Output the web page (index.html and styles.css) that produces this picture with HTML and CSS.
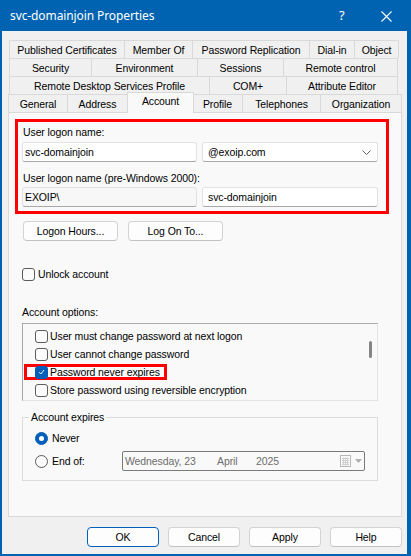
FILE: index.html
```html
<!DOCTYPE html>
<html>
<head>
<meta charset="utf-8">
<link rel="stylesheet" href="styles.css">
</head>
<body>
<div class="window">
  <div class="titlebar">
    <span class="title">svc-domainjoin Properties</span>
    <span class="help">?</span>
    <svg class="close" width="11" height="11" viewBox="0 0 11 11"><path d="M0.5 0.5 L10.5 10.5 M10.5 0.5 L0.5 10.5" stroke="#fff" stroke-width="1.1" fill="none"/></svg>
  </div>
  <div class="client">
    <div class="tabs">
      <div class="tab-row row1">
        <div class="tab">Published Certificates</div><div class="tab">Member Of</div><div class="tab">Password Replication</div><div class="tab">Dial-in</div><div class="tab">Object</div>
      </div>
      <div class="tab-row row2">
        <div class="tab">Security</div><div class="tab">Environment</div><div class="tab">Sessions</div><div class="tab">Remote control</div>
      </div>
      <div class="tab-row row3">
        <div class="tab">Remote Desktop Services Profile</div><div class="tab">COM+</div><div class="tab">Attribute Editor</div>
      </div>
      <div class="tab-row row4">
        <div class="tab">General</div><div class="tab">Address</div><div class="tab active">Account</div><div class="tab">Profile</div><div class="tab">Telephones</div><div class="tab">Organization</div>
      </div>
    </div>
    <div class="panel">
      <div class="redbox">
        <div class="label">User logon name:</div>
        <div class="field-row">
          <div class="input wide">svc-domainjoin</div>
          <div class="input combo">@exoip.com<svg class="chev" width="9" height="5" viewBox="0 0 9 5"><path d="M0.5 0.5 L4.5 4.5 L8.5 0.5" stroke="#606060" fill="none" stroke-width="1"/></svg></div>
        </div>
        <div class="label label2">User logon name (pre-Windows 2000):</div>
        <div class="field-row tight">
          <div class="input wide readonly">EXOIP\</div>
          <div class="input combo">svc-domainjoin</div>
        </div>
      </div>
      <div class="btn-row">
        <div class="btn">Logon Hours...</div>
        <div class="btn">Log On To...</div>
      </div>
      <div class="check-row unlock">
        <span class="cb"></span><span class="cb-text">Unlock account</span>
      </div>
      <div class="label opts">Account options:</div>
      <div class="listbox">
        <div class="item"><span class="cb"></span><span class="cb-text">User must change password at next logon</span></div>
        <div class="item"><span class="cb"></span><span class="cb-text">User cannot change password</span></div>
        <div class="item"><span class="hl"><span class="cb checked"><svg width="7" height="6" viewBox="0 0 7 6"><path d="M1 3.2 L2.8 5 L6 1" stroke="#fff" stroke-width="1" fill="none"/></svg></span><span class="cb-text">Password never expires</span></span></div>
        <div class="item"><span class="cb"></span><span class="cb-text">Store password using reversible encryption</span></div>
        <div class="thumb"></div>
      </div>
      <div class="group">
        <div class="legend">Account expires</div>
        <div class="radio-row first">
          <span class="radio on"></span><span class="radio-text">Never</span>
        </div>
        <div class="radio-row">
          <span class="radio"></span><span class="radio-text endof">End of:</span>
          <div class="date">
            <span class="d1">Wednesday, 23</span><span class="d2">April</span><span class="d3">2025</span>
            <svg class="cal" width="12" height="12" viewBox="0 0 12 12"><rect x="0.5" y="0.5" width="10" height="11" fill="#fafafa" stroke="#b8b8b8"/><path d="M2 3.5 H9 M2 5.5 H9 M2 7.5 H9 M2 9.5 H9 M3.5 2.5 V10.5 M5.5 2.5 V10.5 M7.5 2.5 V10.5" stroke="#d0d0d0" stroke-width="1"/></svg>
            <svg class="darr" width="7" height="4" viewBox="0 0 7 4"><path d="M0 0 H7 L3.5 4 Z" fill="#b0b0b0"/></svg>
          </div>
        </div>
      </div>
    </div>
    <div class="footer">
      <div class="btn fbtn ok">OK</div>
      <div class="btn fbtn">Cancel</div>
      <div class="btn fbtn">Apply</div>
      <div class="btn fbtn">Help</div>
    </div>
  </div>
</div>
</body>
</html>
```

FILE: styles.css
```css
* { box-sizing: border-box; }
html, body { margin: 0; padding: 0; }
body {
  width: 411px;
  height: 556px;
  overflow: hidden;
  background: #0063b1;
  font-family: "Liberation Sans", Arial, sans-serif;
  font-size: 10.5px;
  letter-spacing: -0.1px;
  color: #000;
}
.window { display: flex; flex-direction: column; height: 556px; }
.titlebar {
  height: 31px;
  flex: none;
  display: flex;
  align-items: center;
  padding-left: 10px;
  color: #fff;
  font-family: "Noto Sans", "Open Sans", sans-serif;
  font-size: 12px;
  letter-spacing: 0;
}
.title { flex: 1; letter-spacing: -0.1px; }
.help { width: 8px; margin-right: 34px; font-size: 13px; line-height: 1; }
.close { margin-right: 19px; margin-top: 1px; }
.client {
  flex: 1;
  background: #f0f0f0;
  margin: 0 4px 2px 2px;
  padding: 9px 0 0 6px;
}
.tabs { width: 395px; }
.tab-row { display: grid; height: 18px; margin-left: 1px; align-items: start; }
.row1 { grid-template-columns: 116px 68px 117px 45px 44px; }
.row2 { grid-template-columns: 83px 106px 86px 114px; }
.row3 { grid-template-columns: 201px 77px 111px; }
.row4 { grid-template-columns: 60px 60px 65px 50px 78px 81px; margin-left: 0; }
.tab {
  height: 18px;
  border: 1px solid #d9d9d9;
  border-left: none;
  border-bottom: none;
  background: #f0f0f0;
  text-align: center;
  line-height: 18px;
  white-space: nowrap;
  overflow: hidden;
}
.tab:first-child { border-left: 1px solid #d9d9d9; }
.tab.active {
  position: relative;
  z-index: 1;
  height: 21px;
  margin-top: -2px;
  margin-left: -1px;
  margin-right: -1px;
  border-left: 1px solid #d9d9d9;
  background: #f9f9f9;
  line-height: 17px;
}
.panel {
  width: 394px;
  height: 405px;
  border: 1px solid #d9d9d9;
  background: #f9f9f9;
}
.redbox {
  margin: 6px 0 0 6px;
  width: 374px;
  height: 95px;
  border: 3px solid #f00;
  padding: 3px 8px 0 4px;
}
.label { height: 14px; line-height: 15px; margin-left: 1px; white-space: nowrap; }
.label2 { margin-top: 9px; }
.field-row { display: flex; gap: 5px; margin-top: 3px; }
.field-row.tight { margin-top: 2px; }
.input {
  height: 20px;
  background: #fff;
  border: 1px solid #e2e2e2;
  border-bottom-color: #a8a8a8;
  border-radius: 3px;
  padding-left: 2px;
  line-height: 19px;
  white-space: nowrap;
}
.input.wide { width: 175px; }
.input.combo { width: 176px; padding-left: 5px; display: flex; align-items: center; justify-content: space-between; padding-right: 6px; }
.input.readonly { background: #f7f7f7; }
.chev { flex: none; }
.btn-row { display: flex; gap: 10px; margin: 7px 0 0 14px; }
.btn {
  width: 95px;
  height: 20px;
  background: #fdfdfd;
  border: 1px solid #d3d3d3;
  border-bottom-color: #c2c2c2;
  border-radius: 4px;
  text-align: center;
  line-height: 19px;
}
.check-row { display: flex; align-items: center; height: 13px; }
.unlock { margin: 27px 0 0 13px; }
.cb {
  flex: none;
  width: 13px;
  height: 13px;
  border: 1px solid #5c5c5c;
  border-radius: 3px;
  background: #fbfbfb;
  display: flex;
  align-items: center;
  justify-content: center;
}
.cb.checked { background: #005fb8; border-color: #005fb8; }
.cb-text { margin-left: 3px; white-space: nowrap; line-height: 15px; }
.opts { margin: 24px 0 0 13px; }
.listbox {
  position: relative;
  margin: 4px 0 0 13px;
  width: 356px;
  height: 78px;
  border: 1px solid #a9a9a9;
  border-right-color: #e3e3e3;
  border-bottom-color: #e3e3e3;
  padding-top: 3px;
}
.item { height: 18px; display: flex; align-items: center; padding-left: 12px; }
.item .cb-text { margin-left: 2px; }
.hl {
  display: flex;
  align-items: center;
  height: 16px;
  width: 143px;
  margin-left: -11px;
  padding-left: 8px;
  border: 3px solid #f00;
}
.hl .cb-text { margin-left: 2px; }
.thumb {
  position: absolute;
  right: 5px;
  top: 17px;
  width: 3px;
  height: 17px;
  border-radius: 2px;
  background: #858585;
}
.group {
  margin: 16px 0 0 13px;
  width: 356px;
  height: 64px;
  border: 1px solid #dcdcdc;
  padding-left: 12px;
}
.legend {
  width: fit-content;
  margin: -8px 0 0 -6px;
  padding: 0 2px;
  height: 14px;
  line-height: 15px;
  background: #f9f9f9;
  white-space: nowrap;
}
.radio-row { display: flex; align-items: center; height: 20px; margin-top: 3px; }
.radio-row.first { margin-top: 4px; }
.radio {
  flex: none;
  width: 13px;
  height: 13px;
  border: 1px solid #5c5c5c;
  border-radius: 50%;
  background: #fbfbfb;
  display: flex;
  align-items: center;
  justify-content: center;
}
.radio.on { background: #005fb8; border-color: #005fb8; }
.radio.on::after { content: ""; width: 5px; height: 5px; border-radius: 50%; background: #fff; }
.radio-text { margin-left: 4px; line-height: 15px; white-space: nowrap; }
.radio-text.endof { width: 70px; }
.date {
  width: 243px;
  height: 20px;
  border: 1px solid #7a7a7a;
  border-radius: 2px;
  background: #f9f9f9;
  color: #6d6d6d;
  display: flex;
  align-items: center;
  padding-left: 2px;
  white-space: nowrap;
}
.d1 { width: 92px; }
.d2 { width: 39px; }
.d3 { width: 84px; }
.cal { flex: none; }
.darr { flex: none; margin-left: 3px; }
.footer { display: flex; justify-content: flex-end; gap: 9px; margin-top: 10px; padding-right: 5px; }
.fbtn { width: 72px; }
.btn.ok { border-color: #005fb8; }
```
